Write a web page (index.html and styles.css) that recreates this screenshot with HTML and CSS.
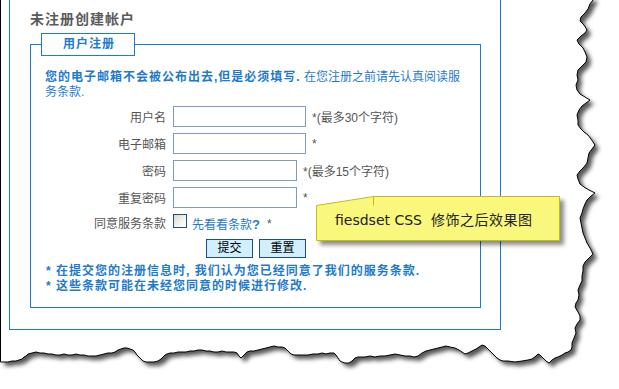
FILE: index.html
```html
<!DOCTYPE html>
<html lang="zh-CN">
<head>
<meta charset="utf-8">
<title>用户注册</title>
<link rel="stylesheet" href="styles.css">
</head>
<body>
<div class="page">
  <svg class="paper" width="619" height="389" viewBox="0 0 619 389" aria-hidden="true">
    <defs>
      <filter id="tornShadow" x="-5%" y="-5%" width="115%" height="115%">
        <feGaussianBlur stdDeviation="2.3"/>
      </filter>
      <path id="torn" d="M593,-3 L593,0 590,4 588,9 585,13 581,17 580,21 584,25 587,30 585,33 581,36 577,40 579,44 583,48 585,52 587,57 586,62 582,66 578,70 577,75 578,80 576,85 577,90 580,94 585,97 590,100 586,103 582,106 579,110 577,115 578,120 578,125 581,129 584,132 588,135 591,139 595,145 592,149 589,153 588,158 587,163 584,167 580,171 577,175 578,179 580,184 584,187 589,190 595,193 591,196 587,200 585,204 583,209 582,213 580,218 581,223 582,228 583,233 585,238 587,243 590,248 593,254 589,258 585,262 583,266 583,271 582,276 582,281 580,285 578,290 579,295 578,300 576,303 575,307 578,312 580,316 580,320 577,324 575,328 576,333 574,338 572,343 572,347 571,350 568,352 565,353 562,355 558,357 555,358 552,360 549,363 546,361 543,358 540,355 538,354 536,356 532,359 528,360 522,361 515,362 508,361 503,361 500,360 497,358 494,355 491,352 488,349 485,346 482,345 479,347 476,349 472,351 468,353 465,354 462,352 459,350 455,348 450,347 446,346 442,347 438,348 434,349 430,350 426,351 422,353 418,356 414,357 410,356 405,356 400,355 395,354 390,355 385,356 380,356 375,357 370,356 365,357 358,357 355,358 352,361 349,363 345,363 342,362 340,361 338,358 336,355 334,353 330,353 326,354 322,353 318,354 313,354 308,355 303,355 298,355 294,355 291,354 289,352 287,350 285,348 282,347 278,347 274,346 270,347 266,348 262,349 258,350 254,351 250,351 247,352 245,354 243,356 241,358 239,356 237,353 234,352 230,352 226,352 222,351 218,352 214,352 210,351 206,351 202,350 198,350 194,351 190,351 186,352 182,352 178,352 174,353 170,353 167,354 165,355 163,357 161,359 158,361 154,362 150,362 146,362 143,361 141,359 139,357 137,355 135,352 133,350 130,349 127,348 124,348 121,349 118,350 115,352 112,353 108,353 104,354 100,355 96,356 92,356 88,356 84,355 80,355 76,354 72,355 68,355 64,354 60,355 56,355 52,354 48,354 44,353 40,353 36,352 32,353 28,354 26,356 24,357 22,359 19,360 16,361 12,361 8,362 4,362 0.5,362 L0.5,-3 Z"/>
    </defs>
    <use href="#torn" class="paper-shadow" transform="translate(4,4)" filter="url(#tornShadow)"/>
    <use href="#torn" class="paper-fill"/>
    <use href="#torn" class="paper-edge"/>
  </svg>

  <div class="panel">
    <h2 class="title">未注册创建帐户</h2>
    <fieldset class="reg">
      <legend>用户注册</legend>
      <p class="intro"><b>您的电子邮箱不会被公布出去,但是必须填写.</b> 在您注册之前请先认真阅读服<br>务条款.</p>
      <div class="row">
        <label class="lbl" for="u">用户名</label>
        <input id="u" class="field long" type="text">
        <span class="hint">*(最多30个字符)</span>
      </div>
      <div class="row">
        <label class="lbl" for="e">电子邮箱</label>
        <input id="e" class="field long" type="text">
        <span class="hint">*</span>
      </div>
      <div class="row">
        <label class="lbl" for="p">密码</label>
        <input id="p" class="field short" type="password">
        <span class="hint">*(最多15个字符)</span>
      </div>
      <div class="row">
        <label class="lbl" for="p2">重复密码</label>
        <input id="p2" class="field short" type="password">
        <span class="hint">*</span>
      </div>
      <div class="row check">
        <label class="lbl" for="agree">同意服务条款</label>
        <input id="agree" class="box" type="checkbox">
        <a class="terms" href="#">先看看条款<b>?</b></a>
        <span class="hint star">*</span>
      </div>
      <div class="buttons">
        <button class="btn" type="button">提交</button>
        <button class="btn" type="button">重置</button>
      </div>
      <ul class="notes">
        <li>* 在提交您的注册信息时, 我们认为您已经同意了我们的服务条款.</li>
        <li>* 这些条款可能在未经您同意的时候进行修改.</li>
      </ul>
    </fieldset>
  </div>

  <div class="tip">
    <svg class="tip-shape" width="244" height="45" viewBox="0 0 244 45" aria-hidden="true">
      <polygon points="0.5,9.5 57.5,0.5 243.5,0.5 243.5,44.5 0.5,44.5"/>
      <line x1="57.5" y1="0.5" x2="57.5" y2="9.5"/>
    </svg>
    <span class="tip-text">fiesdset CSS&nbsp; <span class="tip-cjk">修饰之后效果图</span></span>
  </div>
</div>
</body>
</html>
```

FILE: styles.css
```css
* { box-sizing: border-box; }

html, body {
  margin: 0;
  padding: 0;
  background: #fff;
}

body {
  font-family: "Liberation Sans", "Noto Sans CJK SC", sans-serif;
  font-size: 12px;
  color: #555;
}

.page {
  position: relative;
  width: 619px;
  height: 389px;
  overflow: hidden;
}

/* torn paper edge */
.paper {
  position: absolute;
  left: 0;
  top: 0;
}
.paper-shadow { fill: #444; opacity: 0.9; }
.paper-fill { fill: #fff; }
.paper-edge { fill: none; stroke: #000; stroke-width: 1; }

/* outer box */
.panel {
  position: relative;
  z-index: 1;
  margin-left: 9px;
  width: 492px;
  height: 330px;
  border: 1px solid #1e7ace;
  border-top: 0;
  padding: 10px 19px 0 20px;
}

.title {
  margin: 0;
  font-size: 14px;
  line-height: 18px;
  font-weight: bold;
  letter-spacing: 1px;
  color: #5a5a5a;
}

/* fieldset */
.reg {
  margin: 5px 0 0;
  width: 451px;
  min-width: 0;
  padding: 14px 0 13px 14px;
  border: 1px solid #1e7ace;
}

.reg legend {
  margin-left: -4px;
  padding: 0 19px 0 21px;
  border: 1px solid #1e7ace;
  background: #fff;
  color: #1e7ace;
  font-size: 12px;
  font-weight: bold;
  letter-spacing: 1px;
  line-height: 21px;
}

.intro {
  margin: 0 0 6px;
  line-height: 15px;
  color: #1e7ace;
  white-space: nowrap;
}
.intro b { letter-spacing: 1px; }

.row {
  display: flex;
  align-items: center;
  height: 21px;
  margin-bottom: 6px;
}

.lbl {
  width: 121px;
  margin-right: 7px;
  text-align: right;
  color: #555;
}

.field {
  height: 21px;
  margin: 0;
  padding: 0 3px;
  border: 1px solid #7f9db9;
  background: #fff;
  font: inherit;
}
.field.long { width: 133px; }
.field.short { width: 124px; }

.hint {
  margin-left: 6px;
  color: #555;
}

.row.check {
  align-items: flex-start;
  line-height: 21px;
  margin-bottom: 4px;
}

.box {
  appearance: none;
  -webkit-appearance: none;
  width: 14px;
  height: 14px;
  margin: 0;
  border: 1px solid #1c5180;
  background: linear-gradient(135deg, #d8d8d2 0%, #f4f4f0 60%, #fff 100%);
}

.terms {
  margin-left: 5px;
  color: #1e7ace;
  text-decoration: none;
}
.terms b { font-size: 13px; }

.hint.star { margin-left: 7px; }

.buttons {
  display: flex;
  gap: 6px;
  padding-left: 161px;
}

.btn {
  width: 47px;
  height: 19px;
  margin: 0;
  padding: 0;
  border: 1px solid #1d4e8c;
  background: #d2efff;
  color: #000;
  font: 12px/17px "Liberation Sans", "Noto Sans CJK SC", sans-serif;
}

.notes {
  list-style: none;
  margin: 6px 0 0;
  padding: 0 0 0 1px;
  line-height: 15px;
  font-weight: bold;
  letter-spacing: 1px;
  color: #1e7ace;
}

/* callout note */
.tip {
  position: absolute;
  left: 316px;
  top: 196px;
  width: 244px;
  height: 45px;
  z-index: 2;
}

.tip-shape {
  position: absolute;
  left: 0;
  top: 0;
  overflow: visible;
  filter: drop-shadow(4px 4px 2px rgba(0, 0, 0, 0.45));
}
.tip-shape polygon { fill: #f9f77c; stroke: #c3bd12; stroke-width: 1; }
.tip-shape line { stroke: #c3bd12; stroke-width: 1; }

.tip-text {
  position: relative;
  display: block;
  padding: 14px 0 0 19px;
  font: 14px/20px "DejaVu Sans", "Noto Sans CJK SC", sans-serif;
  color: #222;
  white-space: nowrap;
}
.tip-cjk { letter-spacing: 0.5px; }
```
